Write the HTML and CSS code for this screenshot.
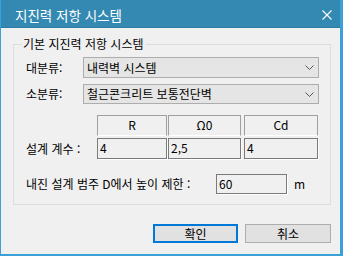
FILE: index.html
```html
<!DOCTYPE html>
<html lang="ko">
<head>
    <meta charset="UTF-8">
    <title>지진력 저항 시스템</title>
    <link rel="stylesheet" href="styles.css">
</head>
<body>

<div class="window">
    <div class="titlebar">
        <span class="title">지진력 저항 시스템</span>
        <svg class="close" width="10" height="10" viewBox="0 0 10 10">
            <path d="M0.5 0.5 L9.5 9.5 M9.5 0.5 L0.5 9.5" stroke="#fff" stroke-width="1.1" fill="none"/>
        </svg>
    </div>

    <div class="content">
        <fieldset class="group">
            <legend>기본 지진력 저항 시스템</legend>

            <div class="row row-main">
                <span class="label">대분류:</span>
                <div class="combo">
                    <span>내력벽 시스템</span>
                    <svg width="9" height="5" viewBox="0 0 9 5"><path d="M0.5 0.5 L4.5 4.5 L8.5 0.5" stroke="#555" fill="none"/></svg>
                </div>
            </div>

            <div class="row row-sub">
                <span class="label">소분류:</span>
                <div class="combo combo-sub">
                    <span>철근콘크리트 보통전단벽</span>
                    <svg width="9" height="5" viewBox="0 0 9 5"><path d="M0.5 0.5 L4.5 4.5 L8.5 0.5" stroke="#555" fill="none"/></svg>
                </div>
            </div>

            <div class="coef">
                <span></span>
                <div class="head">R</div>
                <div class="head">Ω0</div>
                <div class="head">Cd</div>
                <span class="label">설계 계수 :</span>
                <div class="field">4</div>
                <div class="field">2,5</div>
                <div class="field">4</div>
            </div>

            <div class="row row-height">
                <span class="label label-long">내진 설계 범주 D에서 높이 제한 :</span>
                <div class="field field-height">60</div>
                <span class="unit">m</span>
            </div>
        </fieldset>

        <div class="buttons">
            <button class="btn btn-default">확인</button>
            <button class="btn">취소</button>
        </div>
    </div>
</div>

</body>
</html>
```

FILE: styles.css
```css
body {
    margin: 0;
    padding: 0;
    font-family: "Noto Sans CJK KR", "Noto Sans", sans-serif;
    font-size: 12px;
    color: #000;
    background-color: #f0f0f0;
}

.window {
    width: 343px;
    height: 256px;
    box-sizing: border-box;
    border-left: 1px solid #3b9fd8;
    border-right: 3px solid #3b9fd8;
    border-bottom: 2px solid #3b9fd8;
    background-color: #f0f0f0;
    overflow: hidden;
}

.titlebar {
    height: 28px;
    box-sizing: border-box;
    background-color: #3489b2;
    border-bottom: 1px solid #2e7ba1;
    display: flex;
    align-items: center;
    justify-content: space-between;
    padding: 0 8px 0 14px;
    color: #fff;
}

.title {
    font-size: 13.5px;
    line-height: 16px;
    margin-top: 2px;
}

.close {
    margin-top: 2px;
}

.content {
    padding: 8px 9px 0 12px;
}

.group {
    margin: 0;
    width: 318px;
    box-sizing: border-box;
    border: 1px solid #dcdcdc;
    padding: 5px 11px 10px 12px;
}

.group legend {
    padding: 0 3px 0 1px;
    margin-left: -4px;
    line-height: 16px;
    font-size: 12px;
}

.row {
    display: flex;
    align-items: center;
}

.label {
    line-height: 16px;
}

.row-main .label,
.row-sub .label {
    width: 57px;
}

.row-sub {
    margin-top: 6px;
}

.combo {
    flex: 1;
    height: 21px;
    box-sizing: border-box;
    border: 1px solid #adadad;
    background-color: #e5e5e5;
    display: flex;
    align-items: center;
    justify-content: space-between;
    padding: 0 4px 0 3px;
    line-height: 16px;
}

.combo-sub {
    height: 20px;
}

.coef {
    display: grid;
    grid-template-columns: 71px 70px 74px 74px;
    column-gap: 0;
    row-gap: 2px;
    margin-top: 11px;
    align-items: center;
}

.coef .head:nth-child(4),
.coef .field:nth-child(8) {
    margin-left: 3px;
    width: 74px;
}

.coef .head:nth-child(3),
.coef .field:nth-child(7) {
    width: 73px;
    margin-left: 1px;
}

.head {
    height: 21px;
    box-sizing: border-box;
    border: 1px solid #a0a0a0;
    border-bottom-color: #fff;
    text-align: center;
    line-height: 18px;
}

.field {
    height: 21px;
    box-sizing: border-box;
    border: 1px solid #7a7a7a;
    box-shadow: 1px 1px 0 #fff;
    padding-left: 2px;
    line-height: 18px;
}

.row-height {
    margin-top: 15px;
}

.label-long {
    width: 190px;
}

.field-height {
    width: 71px;
    height: 20px;
    line-height: 17px;
}

.unit {
    margin-left: 7px;
    line-height: 16px;
}

.buttons {
    display: flex;
    justify-content: flex-end;
    gap: 7px;
    margin-top: 19px;
    width: 318px;
}

.btn {
    font-family: inherit;
    font-size: 12px;
    height: 19px;
    width: 86px;
    box-sizing: border-box;
    border: 1px solid #adadad;
    background-color: #e1e1e1;
    padding: 0;
    line-height: 15px;
    color: #000;
}

.btn-default {
    width: 85px;
    border: 2px solid #0078d7;
}
```
